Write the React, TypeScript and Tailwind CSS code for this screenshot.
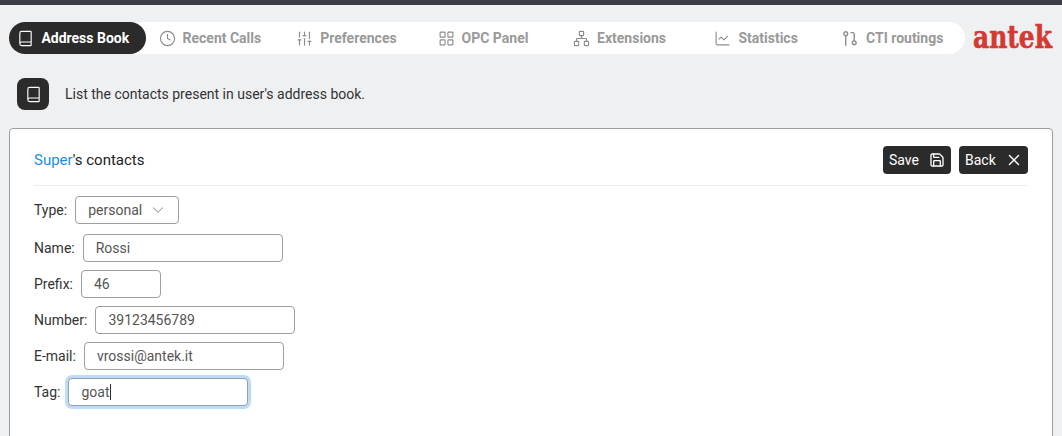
import { Book, ChartLine, ChevronDown, Clock, LayoutGrid, Network, Save, SlidersVertical, X } from 'lucide-react';
import type { ComponentType } from 'react';

// two little circles joined by a bent line, lucide has nothing this close
function Routing({ className }: { className?: string }) {
  return (
    <svg className={className} viewBox="0 0 16 16" fill="none" stroke="currentColor" strokeWidth="1.3" strokeLinecap="round" strokeLinejoin="round">
      <circle cx="3.5" cy="3.5" r="1.8" />
      <circle cx="11.5" cy="12" r="1.8" />
      <path d="M3.5 5.3v9" />
      <path d="M8.5 2.5h1.5a1.5 1.5 0 0 1 1.5 1.5v6.2" />
    </svg>
  );
}

const tabs: { label: string; icon: ComponentType<{ className?: string; strokeWidth?: number }>; active?: boolean }[] = [
  { label: 'Address Book', icon: Book, active: true },
  { label: 'Recent Calls', icon: Clock },
  { label: 'Preferences', icon: SlidersVertical },
  { label: 'OPC Panel', icon: LayoutGrid },
  { label: 'Extensions', icon: Network },
  { label: 'Statistics', icon: ChartLine },
  { label: 'CTI routings', icon: Routing },
];

function Field({ label, value, width }: { label: string; value: string; width: string }) {
  return (
    <div className="flex items-center gap-2 h-7">
      <label className="text-sm text-[#333]">{label}</label>
      <input
        readOnly
        value={value}
        className={`${width} h-7 rounded border border-[#9a9fa6] bg-white px-3 text-sm text-[#555] outline-none`}
      />
    </div>
  );
}

export default function App() {
  return (
    <div className="h-[436px] overflow-hidden bg-[#eff0f2] font-['Roboto',sans-serif]">
      <div className="h-[5px] bg-[#3b3e42]" />

      {/* Nav */}
      <div className="flex items-center gap-2 pl-[9px] mt-[17px] h-8">
        <nav className="grid grid-cols-7 w-[956px] h-8 rounded-2xl bg-white">
          {tabs.map(({ label, icon: Icon, active }) => (
            <div
              key={label}
              className={`flex items-center justify-center gap-[7px] pr-2 rounded-2xl text-sm font-bold ${active ? 'bg-[#2b2b2b] text-white' : 'text-[#999]'}`}
            >
              <Icon className={`w-[17px] h-[17px] ${active ? '' : 'text-[#8c8c8c]'}`} strokeWidth={1.6} />
              {label}
            </div>
          ))}
        </nav>
        <div className="w-20 pb-[3px]">
          <span className="block origin-left scale-x-[0.78] font-['DejaVu_Serif',serif] text-[32px] leading-8 font-bold text-[#d43a32] [-webkit-text-stroke:0.6px_#d43a32]">antek</span>
        </div>
      </div>

      {/* Description */}
      <div className="flex items-center gap-4 pl-[17px] mt-[24px] h-8">
        <div className="flex items-center justify-center w-8 h-8 rounded-lg bg-[#2b2b2b] text-white">
          <Book className="w-[17px] h-[17px]" strokeWidth={1.6} />
        </div>
        <p className="text-sm text-[#333]">List the contacts present in user's address book.</p>
      </div>

      {/* Card */}
      <div className="mx-[9px] mt-[18px] h-[400px] rounded border border-[#9a9fa6] bg-white px-6 pt-[17px]">
        <div className="flex items-center justify-between pb-[11px] border-b border-[#eceef0]">
          <h2 className="text-[15px] text-[#222]">
            <span className="text-[#1b8fe0]">Super</span>'s contacts
          </h2>
          <div className="flex gap-2">
            <button className="flex items-center justify-between w-[68px] h-7 pl-[6px] pr-[6px] rounded bg-[#2b2b2b] text-sm text-white">
              Save <Save className="w-4 h-4" strokeWidth={2} />
            </button>
            <button className="flex items-center justify-between w-[69px] h-7 pl-[6px] pr-[5px] rounded bg-[#2b2b2b] text-sm text-white">
              Back <X className="w-[18px] h-[18px]" strokeWidth={2} />
            </button>
          </div>
        </div>

        <div className="flex flex-col gap-2 mt-[10px]">
          <div className="flex items-center gap-2 h-7 mb-[2px]">
            <label className="text-sm text-[#333]">Type:</label>
            <div className="flex items-center gap-[7px] w-[104px] h-7 rounded border border-[#9a9fa6] pl-3 pr-2 text-sm text-[#555]">
              personal <ChevronDown className="w-[18px] h-[18px] text-[#999]" strokeWidth={1.4} />
            </div>
          </div>
          <Field label="Name:" value="Rossi" width="w-[200px]" />
          <Field label="Prefix:" value="46" width="w-[80px]" />
          <Field label="Number:" value="39123456789" width="w-[200px]" />
          <Field label="E-mail:" value="vrossi@antek.it" width="w-[200px]" />
          <div className="flex items-center gap-2 h-7">
            <label className="text-sm text-[#333]">Tag:</label>
            <div className="flex items-center w-[180px] h-7 rounded border border-[#9a9fa6] bg-white px-3 text-sm text-[#555] ring-[3px] ring-[#bddbfb]">
              goat
              <span className="w-px h-4 bg-[#333]" />
            </div>
          </div>
        </div>
      </div>
    </div>
  );
}
